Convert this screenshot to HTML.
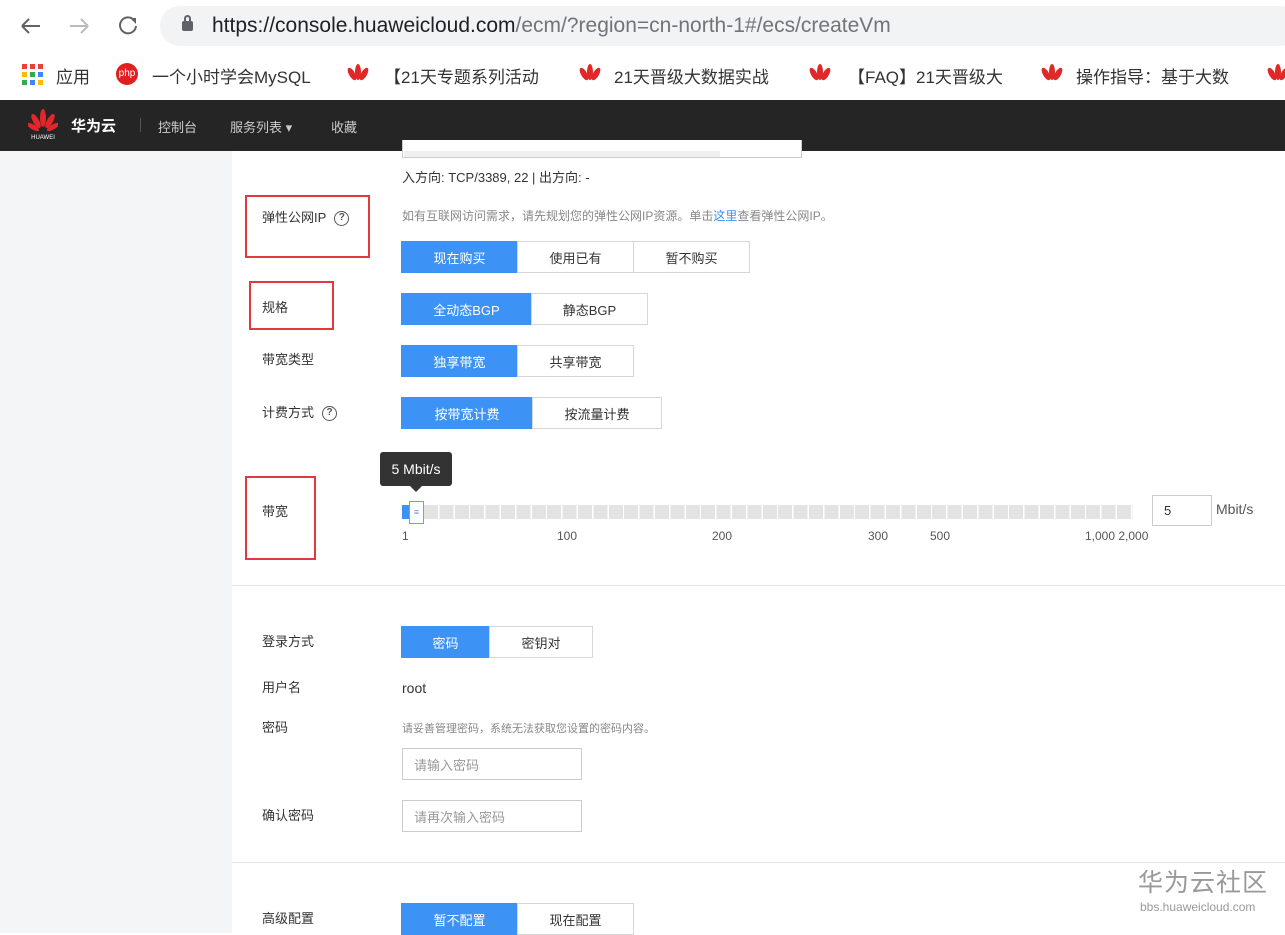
<!DOCTYPE html><html><head><meta charset="utf-8"><style>
*{margin:0;padding:0;box-sizing:border-box}
body{width:1285px;height:933px;position:relative;overflow:hidden;background:#fff;font-family:"Liberation Sans","Noto Sans CJK SC",sans-serif;color:#333}
.a{position:absolute}
.t{position:absolute;font-size:13px;color:#333;white-space:nowrap;line-height:16px}
.bg{position:absolute;display:flex;height:32px}
.bg div{border:1px solid #d6d6d6;margin-left:-1px;display:flex;align-items:center;justify-content:center;font-size:13px;color:#333;background:#fff}
.bg div.on{background:#3d93f5;border-color:#3d93f5;color:#fff}
.red{position:absolute;border:2px solid #e0393e}
.q{display:inline-block;width:15px;height:15px;border:1.5px solid #555;border-radius:50%;font-size:10px;text-align:center;line-height:12px;font-weight:bold;color:#555;vertical-align:middle;margin-left:8px}
.inp{position:absolute;border:1px solid #ccc;font-size:13px;color:#999;padding-left:11px;display:flex;align-items:center}
.bm{position:absolute;top:63px;font-size:17px;color:#333;white-space:nowrap}
</style></head><body>
<div class="a" style="left:0;top:0;width:1285px;height:100px;background:#fff"></div>
<div class="a" style="left:160px;top:6px;width:1140px;height:40px;border-radius:20px;background:#f1f3f4"></div>
<svg class="a" style="left:18px;top:14px" width="130" height="24"><path d="M4 12h18M4 12l7-7M4 12l7 7" stroke="#5f6368" stroke-width="2" fill="none"/><path d="M52 12h18M70 12l-7-7M70 12l-7 7" stroke="#bbb" stroke-width="2" fill="none"/><path d="M116 6a8 8 0 1 0 2 6" stroke="#5f6368" stroke-width="2" fill="none"/><path d="M112 4h6v6z" fill="#5f6368"/></svg>
<div class="a" style="left:182px;top:21px;width:11px;height:10px;background:#5f6368;border-radius:2px"></div>
<div class="a" style="left:184px;top:15px;width:7px;height:8px;border:2px solid #5f6368;border-bottom:none;border-radius:4px 4px 0 0"></div>
<div class="a" style="left:212px;top:14px;font-size:21px;color:#202124;white-space:nowrap">https://console.huaweicloud.com<span style="color:#70757a">/ecm/?region=cn-north-1#/ecs/createVm</span></div>
<svg class="a" style="left:22px;top:64px" width="22" height="22"><g fill="#e94235"><rect x="0" y="0" width="5" height="5"/><rect x="8" y="0" width="5" height="5"/><rect x="16" y="0" width="5" height="5"/></g><g fill="#fbbc04"><rect x="0" y="8" width="5" height="5"/><rect x="8" y="8" width="5" height="5" fill="#34a853"/><rect x="16" y="8" width="5" height="5" fill="#4285f4"/></g><rect x="0" y="16" width="5" height="5" fill="#34a853"/><rect x="8" y="16" width="5" height="5" fill="#4285f4"/><rect x="16" y="16" width="5" height="5" fill="#fbbc04"/></svg>
<div class="bm" style="left:56px">应用</div>
<div class="a" style="left:116px;top:63px;width:22px;height:22px;border-radius:50%;background:#e02020;color:#fff;font-size:10px;text-align:center;line-height:22px">php</div>
<div class="bm" style="left:152px">一个小时学会MySQL</div>
<div class="bm" style="left:384px">【21天专题系列活动</div>
<div class="bm" style="left:614px">21天晋级大数据实战</div>
<div class="bm" style="left:848px">【FAQ】21天晋级大</div>
<div class="bm" style="left:1076px">操作指导：基于大数</div>
<svg class="a" style="left:346px;top:62px" width="960" height="26"><g fill="#e02828"><g id="hw"><ellipse cx="12" cy="10" rx="3" ry="8"/><ellipse cx="6" cy="12" rx="3" ry="7" transform="rotate(-30 6 12)"/><ellipse cx="18" cy="12" rx="3" ry="7" transform="rotate(30 18 12)"/></g><use href="#hw" x="232"/><use href="#hw" x="462"/><use href="#hw" x="694"/><use href="#hw" x="920"/></g></svg>
<div class="a" style="left:0;top:100px;width:1285px;height:51px;background:#252525"></div>
<svg class="a" style="left:28px;top:108px" width="30" height="32"><g fill="#e3262c"><ellipse cx="15" cy="10" rx="3" ry="9"/><ellipse cx="8" cy="13" rx="3" ry="8" transform="rotate(-30 8 13)"/><ellipse cx="22" cy="13" rx="3" ry="8" transform="rotate(30 22 13)"/><ellipse cx="5" cy="19" rx="2.5" ry="7" transform="rotate(-60 5 19)"/><ellipse cx="25" cy="19" rx="2.5" ry="7" transform="rotate(60 25 19)"/></g><text x="15" y="31" font-size="6" fill="#fff" text-anchor="middle" font-family="Liberation Sans">HUAWEI</text></svg>
<div class="a" style="left:71px;top:115px;font-size:15px;color:#fff;font-weight:bold">华为云</div>
<div class="a" style="left:140px;top:118px;width:1px;height:14px;background:#555"></div>
<div class="a" style="left:158px;top:117px;font-size:13px;color:#ccc">控制台</div>
<div class="a" style="left:230px;top:117px;font-size:13px;color:#ccc">服务列表 ▾</div>
<div class="a" style="left:331px;top:117px;font-size:13px;color:#ccc">收藏</div>
<div class="a" style="left:0;top:151px;width:232px;height:782px;background:#f4f5f7"></div>
<div class="a" style="left:402px;top:140px;width:400px;height:18px;border:1px solid #ccc;border-top:none;background:#fff"></div>
<div class="a" style="left:404px;top:151px;width:316px;height:6px;background:#f0f0f0"></div>
<div class="t" style="left:402px;top:170px">入方向: TCP/3389, 22 | 出方向: -</div>
<div class="t" style="left:262px;top:210px">弹性公网IP<span class="q">?</span></div>
<div class="t" style="left:402px;top:208px;font-size:12px;color:#888">如有互联网访问需求，请先规划您的弹性公网IP资源。单击<span style="color:#3d93f5">这里</span>查看弹性公网IP。</div>
<div class="bg" style="left:402px;top:241px"><div class="on" style="width:117px">现在购买</div><div style="width:117px">使用已有</div><div style="width:117px">暂不购买</div></div>
<div class="t" style="left:262px;top:300px">规格</div>
<div class="bg" style="left:402px;top:293px"><div class="on" style="width:131px">全动态BGP</div><div style="width:117px">静态BGP</div></div>
<div class="t" style="left:262px;top:352px">带宽类型</div>
<div class="bg" style="left:402px;top:345px"><div class="on" style="width:117px">独享带宽</div><div style="width:117px">共享带宽</div></div>
<div class="t" style="left:262px;top:405px">计费方式<span class="q">?</span></div>
<div class="bg" style="left:402px;top:397px"><div class="on" style="width:132px">按带宽计费</div><div style="width:130px">按流量计费</div></div>
<div class="a" style="left:380px;top:452px;width:72px;height:34px;background:#333;border-radius:3px;color:#fff;font-size:14px;text-align:center;line-height:34px">5 Mbit/s</div>
<div class="a" style="left:410px;top:486px;border:6px solid transparent;border-top-color:#333"></div>
<div class="t" style="left:262px;top:504px">带宽</div>
<div class="a" style="left:402px;top:505px;width:9px;height:14px;background:#3d93f5"></div>
<div class="a" style="left:424px;top:505px;width:709px;height:14px;background:repeating-linear-gradient(90deg,#e3e3e3 0 14px,#fff 14px 15.4px)"></div>
<div class="a" style="left:409px;top:501px;width:15px;height:23px;border:1px solid #7a9ae8;background:#fff;color:#6a8ae0;font-size:9px;text-align:center;line-height:21px">≡</div>
<div class="t" style="left:402px;top:528px;font-size:12px;color:#555">1</div>
<div class="t" style="left:557px;top:528px;font-size:12px;color:#555">100</div>
<div class="t" style="left:712px;top:528px;font-size:12px;color:#555">200</div>
<div class="t" style="left:868px;top:528px;font-size:12px;color:#555">300</div>
<div class="t" style="left:930px;top:528px;font-size:12px;color:#555">500</div>
<div class="t" style="left:1085px;top:528px;font-size:12px;color:#555">1,000 2,000</div>
<div class="inp" style="left:1152px;top:495px;width:60px;height:31px;color:#333">5</div>
<div class="t" style="left:1216px;top:501px;font-size:14px;color:#555">Mbit/s</div>
<div class="a" style="left:232px;top:585px;width:1053px;height:1px;background:#e6e6e6"></div>
<div class="t" style="left:262px;top:634px">登录方式</div>
<div class="bg" style="left:402px;top:626px"><div class="on" style="width:89px">密码</div><div style="width:104px">密钥对</div></div>
<div class="t" style="left:262px;top:680px">用户名</div>
<div class="t" style="left:402px;top:680px;font-size:14px">root</div>
<div class="t" style="left:262px;top:720px">密码</div>
<div class="t" style="left:402px;top:721px;font-size:11px;color:#888">请妥善管理密码，系统无法获取您设置的密码内容。</div>
<div class="inp" style="left:402px;top:748px;width:180px;height:32px">请输入密码</div>
<div class="t" style="left:262px;top:808px">确认密码</div>
<div class="inp" style="left:402px;top:800px;width:180px;height:32px">请再次输入密码</div>
<div class="a" style="left:232px;top:862px;width:1053px;height:1px;background:#e6e6e6"></div>
<div class="t" style="left:262px;top:911px">高级配置</div>
<div class="bg" style="left:402px;top:903px"><div class="on" style="width:117px">暂不配置</div><div style="width:117px">现在配置</div></div>
<div class="a" style="left:1138px;top:868px;font-size:25px;line-height:30px;color:#999;letter-spacing:1px">华为云社区</div>
<div class="a" style="left:1140px;top:900px;font-size:12px;line-height:15px;color:#999">bbs.huaweicloud.com</div>
<div class="red" style="left:245px;top:195px;width:125px;height:63px"></div>
<div class="red" style="left:249px;top:281px;width:85px;height:49px"></div>
<div class="red" style="left:245px;top:476px;width:71px;height:84px"></div>
</body></html>
